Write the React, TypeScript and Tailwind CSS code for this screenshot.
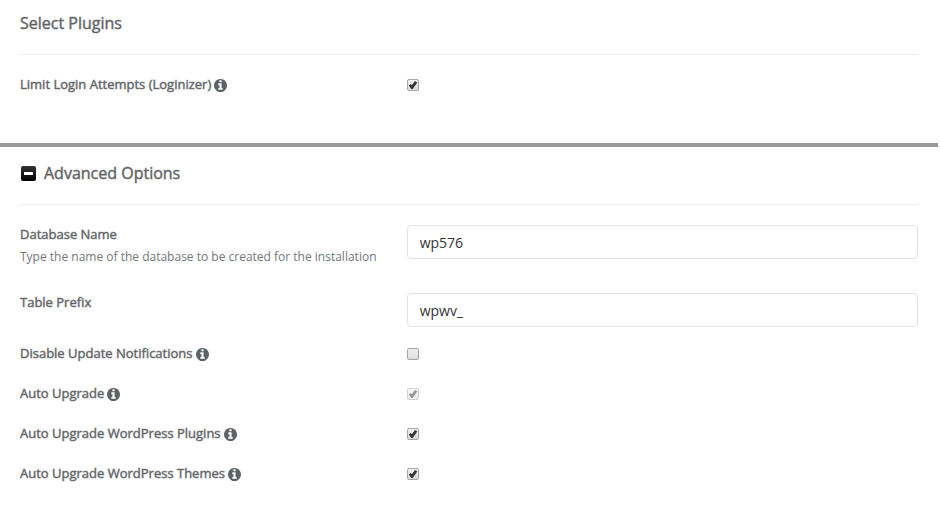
import React, { useId, useState } from 'react';

type CheckRowProps = {
  label: string;
  hint: string;
  checked?: boolean;
  disabled?: boolean;
};

function InfoIcon() {
  return (
    <svg viewBox="0 0 1536 1536" fill="currentColor" className="block size-[13px]">
      <path d="M1024 1248v-160q0-14-9-23t-23-9h-96v-512q0-14-9-23t-23-9h-320q-14 0-23 9t-9 23v160q0 14 9 23t23 9h96v320h-96q-14 0-23 9t-9 23v160q0 14 9 23t23 9h448q14 0 23-9t9-23zM896 352v-160q0-14-9-23t-23-9h-192q-14 0-23 9t-9 23v160q0 14 9 23t23 9h192q14 0 23-9t9-23zM1536 768q0 209-103 385.5t-279.5 279.5-385.5 103-385.5-103-279.5-279.5-103-385.5 103-385.5 279.5-279.5 385.5-103 385.5 103 279.5 279.5 103 385.5z" />
    </svg>
  );
}

function SectionHeader({ children }: { children: React.ReactNode }) {
  return (
    <header className="flex h-[50px] items-start border-b border-[#ededed] text-[16px] leading-6 text-[#5f6366]">
      {children}
    </header>
  );
}

function Checkbox({ id, checked = false, disabled = false }: { id: string; checked?: boolean; disabled?: boolean }) {
  const [on, setOn] = useState(checked);

  return (
    <span className={`relative block size-3 ${disabled ? 'opacity-50' : ''}`}>
      <input
        id={id}
        type="checkbox"
        checked={on}
        disabled={disabled}
        onChange={(e) => setOn(e.target.checked)}
        className="block size-3 appearance-none rounded-[2px] border border-[#a5a5a5] bg-linear-to-b from-[#efefef] to-[#dcdcdc]"
      />
      {on && (
        <svg viewBox="0 0 12 12" className="pointer-events-none absolute inset-0 size-3">
          <path d="M1.8 6.6 3.6 4.9 4.9 6.2 8 2 10.3 3.6 5.7 9.9H4.2Z" fill="#333" />
        </svg>
      )}
    </span>
  );
}

function CheckRow({ label, hint, checked, disabled }: CheckRowProps) {
  const id = useId();

  return (
    <div className="-mx-[15px] grid h-10 grid-cols-[5fr_7fr]">
      <div className="flex h-5 items-start gap-[3px] px-[15px] text-[13px] leading-[18px] text-[#5f6366]">
        <label htmlFor={id} className="[-webkit-text-stroke:1px_#5f636670]">{label}</label>
        <span title={hint} className="pt-1">
          <InfoIcon />
        </span>
      </div>
      <div className="flex h-5 items-center px-[15px]">
        <Checkbox id={id} checked={checked} disabled={disabled} />
      </div>
    </div>
  );
}

function TextRow({ label, description, value }: { label: string; description?: string; value: string }) {
  const id = useId();

  return (
    <div className="-mx-[15px] grid h-[68px] grid-cols-[5fr_7fr]">
      <div className="px-[15px]">
        <label htmlFor={id} className="block text-[13px] leading-[18px] text-[#5f6366] [-webkit-text-stroke:1px_#5f636670]">{label}</label>
        {description && <p className="mt-1 text-[12px] leading-5 text-[#73777a]">{description}</p>}
      </div>
      <div className="px-[15px]">
        <input
          id={id}
          type="text"
          defaultValue={value}
          className="block h-[34px] w-full rounded-[4px] border border-[#e2e2e2] bg-white px-3 text-[14px] text-[#333] outline-none"
        />
      </div>
    </div>
  );
}

export default function App() {
  const [open, setOpen] = useState(true);

  return (
    <main className="mr-[2px] bg-white font-['Open_Sans',sans-serif]">
      {/* PLUGINS */}
      <section className="px-5 pt-[5px] pb-7">
        <SectionHeader>
          <h2 className="pt-[6px] [-webkit-text-stroke:1px_#5f636670]">Select Plugins</h2>
        </SectionHeader>
        <div className="pt-5">
          <CheckRow label="Limit Login Attempts (Loginizer)" hint="Limits the number of login attempts" checked />
        </div>
      </section>

      {/* ADVANCED OPTIONS */}
      <section className="border-t-4 border-[#999] px-5 pt-2">
        <SectionHeader>
          <button type="button" aria-label="Toggle advanced options" onClick={() => setOpen(!open)} className="mt-[11px] mr-2 ml-px">
            <svg viewBox="0 0 15 15" className="block size-[15px]">
              <defs>
                <linearGradient id="toggle" x1="0" y1="0" x2="0" y2="1">
                  <stop offset="0" stopColor="#333" />
                  <stop offset="1" stopColor="#000" />
                </linearGradient>
              </defs>
              <rect width="15" height="15" rx="2" fill="url(#toggle)" />
              <rect x="3" y="6" width="9" height="3" fill="#fff" />
              {!open && <rect x="6" y="3" width="3" height="9" fill="#fff" />}
            </svg>
          </button>
          <h2 className="pt-[6px] [-webkit-text-stroke:1px_#5f636670]">Advanced Options</h2>
        </SectionHeader>
        {open && (
          <div className="pt-5">
            <TextRow label="Database Name" description="Type the name of the database to be created for the installation" value="wp576" />
            <TextRow label="Table Prefix" value="wpwv_" />
            <div className="-mt-[17px]">
              <CheckRow label="Disable Update Notifications" hint="Turns off update emails" />
              <CheckRow label="Auto Upgrade" hint="Upgrades the installation when a new version is out" checked disabled />
              <CheckRow label="Auto Upgrade WordPress Plugins" hint="Upgrades the plugins automatically" checked />
              <CheckRow label="Auto Upgrade WordPress Themes" hint="Upgrades the themes automatically" checked />
            </div>
          </div>
        )}
      </section>
    </main>
  );
}
